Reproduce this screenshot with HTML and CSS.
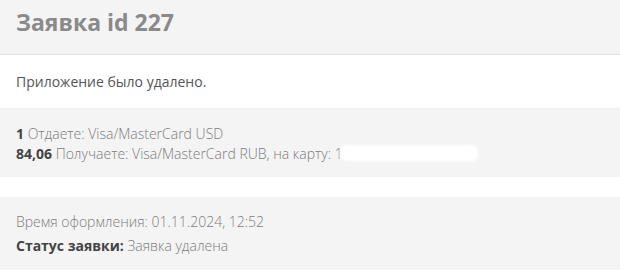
FILE: index.html
```html
<!DOCTYPE html>
<html lang="ru">
<head>
<meta charset="utf-8">
<title>Заявка id 227</title>
<link rel="stylesheet" href="styles.css">
</head>
<body>
<div class="page">
  <header class="head">
    <h1 class="title">Заявка id 227</h1>
  </header>
  <section class="notice">
    <p>Приложение было удалено.</p>
  </section>
  <section class="box details">
    <div class="line"><b>1</b> Отдаете: Visa/MasterCard USD</div>
    <div class="line"><b>84,06</b> Получаете: Visa/MasterCard RUB, на карту: <span class="card">1<span class="redact"></span></span></div>
  </section>
  <div class="spacer"></div>
  <section class="box meta">
    <div class="row">Время оформления: 01.11.2024, 12:52</div>
    <div class="row"><b>Статус заявки:</b> Заявка удалена</div>
  </section>
</div>
</body>
</html>
```

FILE: styles.css
```css
html, body {
  margin: 0;
  padding: 0;
  background: #ffffff;
}
body {
  font-family: "Open Sans", "Noto Sans", sans-serif;
  color: #888888;
}
.page {
  width: 620px;
}
.head {
  height: 54px;
  background: #f4f4f4;
  border-bottom: 1px solid #e3e3e3;
  display: flex;
  align-items: center;
  padding: 0 16px;
}
.title {
  margin: 0;
  font-size: 23px;
  font-weight: 700;
  color: #8a8a8a;
  line-height: 30px;
  position: relative;
  top: -5px;
}
.notice {
  height: 53px;
  padding: 0 16px;
  display: flex;
  align-items: center;
  border-bottom: 1px solid #f0f0f0;
}
.notice p {
  margin: 0;
  font-size: 14px;
  color: #555555;
}
.box {
  background: #f4f4f4;
  padding: 0 16px;
  display: flex;
  flex-direction: column;
  justify-content: center;
  font-size: 14px;
  font-weight: 300;
  color: #7c7c7c;
}
.details {
  height: 68px;
}
.line {
  line-height: 20px;
  position: relative;
  top: 1px;
}
.line b, .row b {
  color: #444444;
  font-weight: 700;
}
.spacer {
  height: 20px;
}
.meta {
  height: 73px;
}
.row {
  line-height: 24px;
}
.card {
  position: relative;
}
.redact {
  position: absolute;
  left: 5px;
  top: 1px;
  width: 138px;
  height: 16px;
  background: #ffffff;
  border-radius: 6px;
  filter: blur(1.5px);
}
```
